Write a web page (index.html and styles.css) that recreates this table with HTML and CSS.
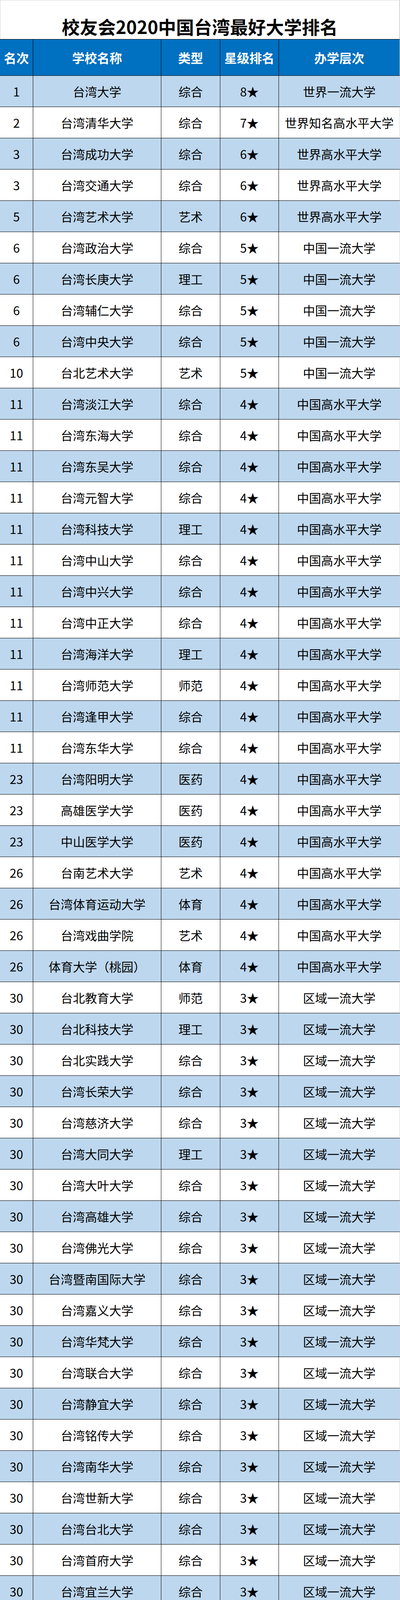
FILE: index.html
```html
<!DOCTYPE html>
<html lang="zh-CN">
<head>
<meta charset="utf-8">
<title>校友会2020中国台湾最好大学排名</title>
<link rel="stylesheet" href="styles.css">
</head>
<body>
<div class="sheet">
  <div class="title">校友会2020中国台湾最好大学排名</div>
  <div class="row head">
    <div class="cell">名次</div><div class="cell">学校名称</div><div class="cell">类型</div><div class="cell">星级排名</div><div class="cell">办学层次</div>
  </div>
  <div class="body">
    <div class="row"><div class="cell">1</div><div class="cell">台湾大学</div><div class="cell">综合</div><div class="cell">8★</div><div class="cell">世界一流大学</div></div>
    <div class="row"><div class="cell">2</div><div class="cell">台湾清华大学</div><div class="cell">综合</div><div class="cell">7★</div><div class="cell">世界知名高水平大学</div></div>
    <div class="row"><div class="cell">3</div><div class="cell">台湾成功大学</div><div class="cell">综合</div><div class="cell">6★</div><div class="cell">世界高水平大学</div></div>
    <div class="row"><div class="cell">3</div><div class="cell">台湾交通大学</div><div class="cell">综合</div><div class="cell">6★</div><div class="cell">世界高水平大学</div></div>
    <div class="row"><div class="cell">5</div><div class="cell">台湾艺术大学</div><div class="cell">艺术</div><div class="cell">6★</div><div class="cell">世界高水平大学</div></div>
    <div class="row"><div class="cell">6</div><div class="cell">台湾政治大学</div><div class="cell">综合</div><div class="cell">5★</div><div class="cell">中国一流大学</div></div>
    <div class="row"><div class="cell">6</div><div class="cell">台湾长庚大学</div><div class="cell">理工</div><div class="cell">5★</div><div class="cell">中国一流大学</div></div>
    <div class="row"><div class="cell">6</div><div class="cell">台湾辅仁大学</div><div class="cell">综合</div><div class="cell">5★</div><div class="cell">中国一流大学</div></div>
    <div class="row"><div class="cell">6</div><div class="cell">台湾中央大学</div><div class="cell">综合</div><div class="cell">5★</div><div class="cell">中国一流大学</div></div>
    <div class="row"><div class="cell">10</div><div class="cell">台北艺术大学</div><div class="cell">艺术</div><div class="cell">5★</div><div class="cell">中国一流大学</div></div>
    <div class="row"><div class="cell">11</div><div class="cell">台湾淡江大学</div><div class="cell">综合</div><div class="cell">4★</div><div class="cell">中国高水平大学</div></div>
    <div class="row"><div class="cell">11</div><div class="cell">台湾东海大学</div><div class="cell">综合</div><div class="cell">4★</div><div class="cell">中国高水平大学</div></div>
    <div class="row"><div class="cell">11</div><div class="cell">台湾东吴大学</div><div class="cell">综合</div><div class="cell">4★</div><div class="cell">中国高水平大学</div></div>
    <div class="row"><div class="cell">11</div><div class="cell">台湾元智大学</div><div class="cell">综合</div><div class="cell">4★</div><div class="cell">中国高水平大学</div></div>
    <div class="row"><div class="cell">11</div><div class="cell">台湾科技大学</div><div class="cell">理工</div><div class="cell">4★</div><div class="cell">中国高水平大学</div></div>
    <div class="row"><div class="cell">11</div><div class="cell">台湾中山大学</div><div class="cell">综合</div><div class="cell">4★</div><div class="cell">中国高水平大学</div></div>
    <div class="row"><div class="cell">11</div><div class="cell">台湾中兴大学</div><div class="cell">综合</div><div class="cell">4★</div><div class="cell">中国高水平大学</div></div>
    <div class="row"><div class="cell">11</div><div class="cell">台湾中正大学</div><div class="cell">综合</div><div class="cell">4★</div><div class="cell">中国高水平大学</div></div>
    <div class="row"><div class="cell">11</div><div class="cell">台湾海洋大学</div><div class="cell">理工</div><div class="cell">4★</div><div class="cell">中国高水平大学</div></div>
    <div class="row"><div class="cell">11</div><div class="cell">台湾师范大学</div><div class="cell">师范</div><div class="cell">4★</div><div class="cell">中国高水平大学</div></div>
    <div class="row"><div class="cell">11</div><div class="cell">台湾逢甲大学</div><div class="cell">综合</div><div class="cell">4★</div><div class="cell">中国高水平大学</div></div>
    <div class="row"><div class="cell">11</div><div class="cell">台湾东华大学</div><div class="cell">综合</div><div class="cell">4★</div><div class="cell">中国高水平大学</div></div>
    <div class="row"><div class="cell">23</div><div class="cell">台湾阳明大学</div><div class="cell">医药</div><div class="cell">4★</div><div class="cell">中国高水平大学</div></div>
    <div class="row"><div class="cell">23</div><div class="cell">高雄医学大学</div><div class="cell">医药</div><div class="cell">4★</div><div class="cell">中国高水平大学</div></div>
    <div class="row"><div class="cell">23</div><div class="cell">中山医学大学</div><div class="cell">医药</div><div class="cell">4★</div><div class="cell">中国高水平大学</div></div>
    <div class="row"><div class="cell">26</div><div class="cell">台南艺术大学</div><div class="cell">艺术</div><div class="cell">4★</div><div class="cell">中国高水平大学</div></div>
    <div class="row"><div class="cell">26</div><div class="cell">台湾体育运动大学</div><div class="cell">体育</div><div class="cell">4★</div><div class="cell">中国高水平大学</div></div>
    <div class="row"><div class="cell">26</div><div class="cell">台湾戏曲学院</div><div class="cell">艺术</div><div class="cell">4★</div><div class="cell">中国高水平大学</div></div>
    <div class="row"><div class="cell">26</div><div class="cell">体育大学（桃园）</div><div class="cell">体育</div><div class="cell">4★</div><div class="cell">中国高水平大学</div></div>
    <div class="row"><div class="cell">30</div><div class="cell">台北教育大学</div><div class="cell">师范</div><div class="cell">3★</div><div class="cell">区域一流大学</div></div>
    <div class="row"><div class="cell">30</div><div class="cell">台北科技大学</div><div class="cell">理工</div><div class="cell">3★</div><div class="cell">区域一流大学</div></div>
    <div class="row"><div class="cell">30</div><div class="cell">台北实践大学</div><div class="cell">综合</div><div class="cell">3★</div><div class="cell">区域一流大学</div></div>
    <div class="row"><div class="cell">30</div><div class="cell">台湾长荣大学</div><div class="cell">综合</div><div class="cell">3★</div><div class="cell">区域一流大学</div></div>
    <div class="row"><div class="cell">30</div><div class="cell">台湾慈济大学</div><div class="cell">综合</div><div class="cell">3★</div><div class="cell">区域一流大学</div></div>
    <div class="row"><div class="cell">30</div><div class="cell">台湾大同大学</div><div class="cell">理工</div><div class="cell">3★</div><div class="cell">区域一流大学</div></div>
    <div class="row"><div class="cell">30</div><div class="cell">台湾大叶大学</div><div class="cell">综合</div><div class="cell">3★</div><div class="cell">区域一流大学</div></div>
    <div class="row"><div class="cell">30</div><div class="cell">台湾高雄大学</div><div class="cell">综合</div><div class="cell">3★</div><div class="cell">区域一流大学</div></div>
    <div class="row"><div class="cell">30</div><div class="cell">台湾佛光大学</div><div class="cell">综合</div><div class="cell">3★</div><div class="cell">区域一流大学</div></div>
    <div class="row"><div class="cell">30</div><div class="cell">台湾暨南国际大学</div><div class="cell">综合</div><div class="cell">3★</div><div class="cell">区域一流大学</div></div>
    <div class="row"><div class="cell">30</div><div class="cell">台湾嘉义大学</div><div class="cell">综合</div><div class="cell">3★</div><div class="cell">区域一流大学</div></div>
    <div class="row"><div class="cell">30</div><div class="cell">台湾华梵大学</div><div class="cell">综合</div><div class="cell">3★</div><div class="cell">区域一流大学</div></div>
    <div class="row"><div class="cell">30</div><div class="cell">台湾联合大学</div><div class="cell">综合</div><div class="cell">3★</div><div class="cell">区域一流大学</div></div>
    <div class="row"><div class="cell">30</div><div class="cell">台湾静宜大学</div><div class="cell">综合</div><div class="cell">3★</div><div class="cell">区域一流大学</div></div>
    <div class="row"><div class="cell">30</div><div class="cell">台湾铭传大学</div><div class="cell">综合</div><div class="cell">3★</div><div class="cell">区域一流大学</div></div>
    <div class="row"><div class="cell">30</div><div class="cell">台湾南华大学</div><div class="cell">综合</div><div class="cell">3★</div><div class="cell">区域一流大学</div></div>
    <div class="row"><div class="cell">30</div><div class="cell">台湾世新大学</div><div class="cell">综合</div><div class="cell">3★</div><div class="cell">区域一流大学</div></div>
    <div class="row"><div class="cell">30</div><div class="cell">台湾台北大学</div><div class="cell">综合</div><div class="cell">3★</div><div class="cell">区域一流大学</div></div>
    <div class="row"><div class="cell">30</div><div class="cell">台湾首府大学</div><div class="cell">综合</div><div class="cell">3★</div><div class="cell">区域一流大学</div></div>
    <div class="row"><div class="cell">30</div><div class="cell">台湾宜兰大学</div><div class="cell">综合</div><div class="cell">3★</div><div class="cell">区域一流大学</div></div>
    <div class="row"><div class="cell">30</div><div class="cell">台湾亚洲大学</div><div class="cell">综合</div><div class="cell">3★</div><div class="cell">区域一流大学</div></div>
    <div class="row"><div class="cell">30</div><div class="cell">台湾义守大学</div><div class="cell">综合</div><div class="cell">3★</div><div class="cell">区域一流大学</div></div>
    <div class="row"><div class="cell">30</div><div class="cell">台湾中国科技大学</div><div class="cell">理工</div><div class="cell">3★</div><div class="cell">区域一流大学</div></div>
    <div class="row"><div class="cell">30</div><div class="cell">台湾中国文化大学</div><div class="cell">综合</div><div class="cell">3★</div><div class="cell">区域一流大学</div></div>
    <div class="row"><div class="cell">30</div><div class="cell">台湾中华大学</div><div class="cell">综合</div><div class="cell">3★</div><div class="cell">区域一流大学</div></div>
    <div class="row"><div class="cell">30</div><div class="cell">台湾中原大学</div><div class="cell">综合</div><div class="cell">3★</div><div class="cell">区域一流大学</div></div>
    <div class="row"><div class="cell">30</div><div class="cell">彰化师范大学</div><div class="cell">师范</div><div class="cell">3★</div><div class="cell">区域一流大学</div></div>
    <div class="row"><div class="cell">57</div><div class="cell">台北医学大学</div><div class="cell">医药</div><div class="cell">3★</div><div class="cell">区域一流大学</div></div>
    <div class="row"><div class="cell">57</div><div class="cell">台湾中国医药大学</div><div class="cell">医药</div><div class="cell">3★</div><div class="cell">区域一流大学</div></div>
    <div class="row"><div class="cell">59</div><div class="cell">高雄餐旅大学</div><div class="cell">财经</div><div class="cell">3★</div><div class="cell">区域一流大学</div></div>
  </div>
</div>
</body>
</html>
```

FILE: styles.css
```css
html, body {
  margin: 0;
  padding: 0;
  background: #ffffff;
}

body {
  font-family: "Noto Sans CJK SC", "Noto Sans", sans-serif;
  color: #000000;
}

.sheet {
  width: 1024px;
}

.title {
  box-sizing: border-box;
  height: 100px;
  border-top: 1px solid #d4d4d4;
  border-left: 1px solid #d4d4d4;
  border-right: 2px solid #d4d4d4;
  display: flex;
  align-items: flex-end;
  justify-content: center;
  padding-bottom: 10px;
  font-size: 46px;
  font-weight: 700;
  line-height: 1;
}

.row {
  box-sizing: border-box;
  display: grid;
  grid-template-columns: 85px 328px 151px 150px 309px;
  height: 80px;
  border-bottom: 1px solid #000000;
  border-right: 1px solid #d4d4d4;
  width: 1024px;
}

.row .cell {
  box-sizing: border-box;
  display: flex;
  align-items: center;
  justify-content: center;
  border-right: 1px solid #000000;
  font-size: 31px;
  line-height: 1;
  white-space: nowrap;
}

.row .cell:last-child {
  border-right: none;
}

.head {
  height: 94px;
  border-top: 1px solid #000000;
  background: #0070c0;
}

.head .cell {
  color: #ffffff;
  font-size: 32px;
  font-weight: 700;
}

.body .row:nth-child(odd) {
  background: #bdd7ee;
}
```
